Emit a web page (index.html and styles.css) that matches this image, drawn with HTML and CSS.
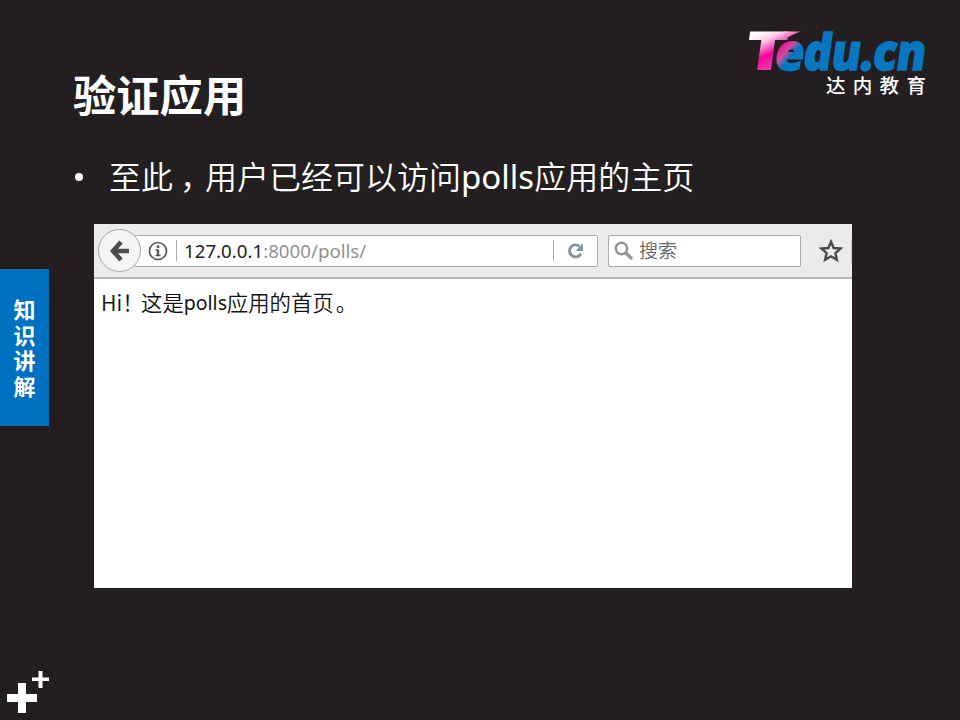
FILE: index.html
```html
<!DOCTYPE html>
<html lang="zh-CN">
<head>
<meta charset="utf-8">
<title>验证应用</title>
<link rel="stylesheet" href="styles.css">
</head>
<body>
<div class="slide">
  <aside class="rail">
    <div class="tab"><span>知</span><span>识</span><span>讲</span><span>解</span></div>
    <svg class="plus" width="49" height="50" viewBox="0 0 49 50"><path fill="#fff" d="M18 13h8v11h11v8H26v11h-8V32H7v-8h11zM38.500 1h4v6.500H49v3.500h-6.500v7h-4v-7H32V7.500h6.500z"/></svg>
  </aside>
  <main class="main">
    <header class="header">
      <h1 class="title">验证应用</h1>
      <div class="logo">
        <svg class="wordmark" width="180" height="46" viewBox="0 0 180 46">
          <defs>
            <linearGradient id="pink" gradientUnits="userSpaceOnUse" x1="8" y1="-38" x2="26" y2="-4"><stop offset="0" stop-color="#fff"/><stop offset=".25" stop-color="#fbd3e9"/><stop offset=".65" stop-color="#f205a0"/><stop offset="1" stop-color="#f23aa8"/></linearGradient>
            <linearGradient id="mix" gradientUnits="userSpaceOnUse" x1="27" y1="-22" x2="47" y2="-8"><stop offset="0" stop-color="#ee078f"/><stop offset=".4" stop-color="#d64aa0"/><stop offset=".7" stop-color="#0877bf"/></linearGradient>
          </defs>
          <g transform="translate(0 43) skewX(-8)">
            <text class="brand cap" x="-4" y="0" textLength="42" lengthAdjust="spacingAndGlyphs" fill="url(#pink)">T</text>
            <path d="M32-38.600h16q-7 3-14 7h-5z" fill="url(#pink)"/>
            <text class="brand bold" x="26.500" y="-.5" textLength="29" lengthAdjust="spacingAndGlyphs" fill="url(#mix)" stroke="url(#mix)">e</text>
            <text class="brand bold" x="55" y="-.5" textLength="122" lengthAdjust="spacingAndGlyphs" fill="#0877bf" stroke="#0877bf">du.cn</text>
          </g>
        </svg>
        <div class="logo-sub">达内教育</div>
      </div>
    </header>
    <ul class="points"><li><i class="dot"></i><span>至此<span class="comma">，</span>用户已经可以访问<span class="latin">polls</span>应用的主页</span></li></ul>
    <section class="browser">
      <div class="toolbar">
        <div class="back"><svg width="20" height="22" viewBox="0 0 20 22"><path d="M11 2 3 11l8 9M4 11h15" fill="none" stroke="#4c4c4c" stroke-width="4.600"/></svg></div>
        <div class="address">
          <svg width="20" height="20" viewBox="0 0 20 20"><circle cx="10" cy="10" r="8.500" fill="none" stroke="#555" stroke-width="1.700"/><path d="M10 8.500v6.500M7.500 9h3M7.500 14.500h5" fill="none" stroke="#555" stroke-width="1.400"/><path d="M10 9v6" stroke="#555" stroke-width="2.400"/><circle cx="10" cy="5.800" r="1.500" fill="#555"/></svg>
          <i class="rule"></i>
          <span class="url"><b>127.0.0.1</b>:8000/polls/</span>
          <i class="rule"></i>
          <svg class="reload" width="18" height="18" viewBox="0 0 18 18"><path d="M12.500 4.300A6 6 0 1 0 14 11.500" fill="none" stroke="#8494a6" stroke-width="2.900"/><path d="M16 1v8H8.500z" fill="#8494a6"/></svg>
        </div>
        <div class="search">
          <svg width="20" height="20" viewBox="0 0 20 20"><circle cx="7.500" cy="7.500" r="5.700" fill="none" stroke="#949494" stroke-width="2.400"/><path d="m12 12 6 6" stroke="#949494" stroke-width="3.400"/></svg>
          <span>搜索</span>
        </div>
        <svg class="star" width="24" height="24" viewBox="0 0 24 24"><path d="m12 2.800 2.700 6.200 6.800.6-5.100 4.500 1.500 6.700-5.900-3.500-5.900 3.500 1.500-6.700-5.100-4.500 6.800-.6z" fill="none" stroke="#4a4a4a" stroke-width="2.400"/></svg>
        <i class="edge"></i>
      </div>
      <div class="page"><span class="hi">Hi！</span><span>这是</span><span class="sans">polls</span><span>应用的首页</span><span class="stop">。</span></div>
    </section>
  </main>
</div>
</body>
</html>
```
FILE: styles.css
```css
* { box-sizing: border-box; }
body { margin: 0; background: #231f20; }
.slide { display: grid; grid-template-columns: 49px 1fr; width: 960px; height: 720px; overflow: hidden; background: #231f20; color: #fff; font-family: "Noto Sans", "Noto Sans CJK SC", sans-serif; }
.rail { display: flex; flex-direction: column; justify-content: space-between; padding-top: 269px; }
.tab { display: flex; flex-direction: column; align-items: center; height: 157px; padding-top: 27px; background: #0070c0; font: 700 22px/25.600px "Noto Sans CJK SC", sans-serif; }
.plus { display: block; }
.main { display: flex; flex-direction: column; align-items: flex-start; padding-left: 25px; }
.header { display: flex; justify-content: space-between; width: 853px; height: 146px; }
.title { margin: 61px 0 0 -1px; font: 700 43.300px/64px "Noto Sans CJK SC", sans-serif; }
.logo { display: flex; flex-direction: column; width: 180px; padding-top: 27px; }
.wordmark { display: block; overflow: visible; }
.brand { font: 800 51px "Open Sans", sans-serif; }
.bold { font-size: 50px; stroke-width: 1.600px; }
.cap { font-size: 54px; }
.logo-sub { margin-left: 79px; font: 500 19.500px/24px "Noto Sans CJK SC", sans-serif; letter-spacing: 7.300px; white-space: nowrap; }
.points { margin: 0; padding: 0; list-style: none; }
.points li { display: flex; align-items: center; height: 58px; font: 350 32px/58px "Noto Sans CJK SC", sans-serif; white-space: nowrap; }
.dot { width: 8px; height: 8px; margin: 3px 26px 0 1px; border-radius: 50%; background: #fff; }
.comma { display: inline-block; width: 32px; padding-left: 7px; }
.latin { font: 400 33px/40px "Noto Sans", sans-serif; }
.browser { width: 758px; height: 364px; margin: 20px 0 0 20px; background: #fff; color: #111; }
.toolbar { display: flex; align-items: center; height: 55px; padding-left: 4px; background: #ebebe9; border-bottom: 2px solid #b6b6b4; }
.back { z-index: 1; display: flex; align-items: center; justify-content: center; width: 43px; height: 43px; border: 1.500px solid #a8a8a8; border-radius: 50%; background: #f4f4f3; }
.address { display: flex; align-items: center; width: 464px; height: 32px; margin-left: -7px; padding-left: 13px; border: 1.500px solid #aaa; border-radius: 2px; background: #fff; }
.rule { width: 1px; height: 21px; margin-left: 8px; background: #aaa; }
.url { width: 369px; margin-left: 7px; color: #929292; font: 18.700px/28px "Noto Sans", sans-serif; white-space: nowrap; }
.url b { color: #222; font-weight: 400; }
.url + .rule { margin-left: 0; }
.reload { margin-left: 13px; }
.search { display: flex; align-items: center; gap: 5px; width: 193px; height: 32px; margin-left: 10px; padding-left: 5px; border: 1.500px solid #aaa; border-radius: 2px; background: #fff; color: #666; font: 350 19px/26px "Noto Sans CJK SC", sans-serif; }
.search span { margin-top: -2px; }
.star { margin-left: 18px; }
.edge { width: 1px; height: 24px; margin-left: 8px; background: #ccc; }
.page { display: flex; padding: 7px 0 0 7px; font: 350 21.400px/32px "Noto Sans CJK SC", sans-serif; white-space: nowrap; }
.hi { width: 40px; }
.sans { width: 43px; font: 400 19.500px/34px "Noto Sans", sans-serif; }
.stop { margin-left: 2px; }
```
